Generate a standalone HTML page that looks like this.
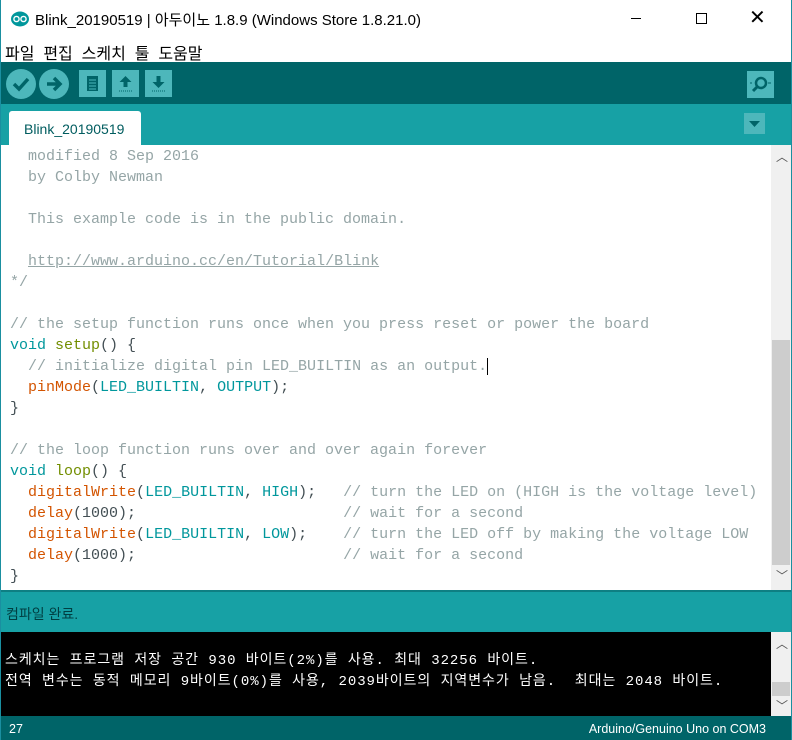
<!DOCTYPE html>
<html><head><meta charset="utf-8"><style>
*{margin:0;padding:0;box-sizing:border-box}
body{width:792px;height:740px;overflow:hidden;background:#fff;font-family:"Liberation Sans","Noto Sans CJK KR",sans-serif;position:relative}
.abs{position:absolute}
#title{left:0;top:0;width:792px;height:38px;background:#fff;font-size:15px;color:#000}
#menu{top:38px;left:0;width:792px;height:24px;font-size:16px}
#tool{top:62px;left:1px;width:790px;height:42px;background:#006468}
#tabs{top:104px;left:1px;width:790px;height:41px;background:#17a1a5}
#ed{top:145px;left:1px;width:770px;height:445px;background:#fff;overflow:hidden}
pre{font-family:"Liberation Mono",monospace;font-size:15px;line-height:21px;color:#434f54;position:absolute;left:9px;top:1px}
.c{color:#95a5a6}.k{color:#00979c}.f{color:#d35400}.s{color:#728e00}
#sb{top:145px;left:771px;width:20px;height:445px;background:#f0f0f0}
#status{top:590px;left:1px;width:790px;height:42px;background:#17a1a5;border-top:2px solid #0e7f83}
#con{top:632px;left:1px;width:770px;height:84px;background:#000;color:#fff;font-family:"Liberation Mono","Noto Sans CJK KR",monospace;font-size:14px;line-height:21px;padding:19px 0 0 4px;letter-spacing:0.95px;white-space:pre}
#sb2{top:632px;left:771px;width:20px;height:84px;background:#f0f0f0}
#foot{top:716px;left:1px;width:790px;height:24px;background:#006468;color:#fff;font-size:12.5px}
.btn{position:absolute;top:8px;width:27px;height:27px;background:#4db7bb}
.cir{position:absolute;top:7px;width:30px;height:30px;border-radius:50%;background:#4db7bb}
</style></head><body>
<div class="abs" style="left:0;top:0;width:1px;height:740px;background:#1a8fa0;z-index:5"></div>
<div class="abs" style="left:791px;top:0;width:1px;height:740px;background:#1a8fa0;z-index:5"></div>
<div id="title" class="abs">
 <svg class="abs" style="left:11px;top:11px" width="18" height="16"><ellipse cx="9" cy="8" rx="9" ry="7.5" fill="#00979c"/><circle cx="5.5" cy="8" r="2.6" fill="none" stroke="#fff" stroke-width="1.4"/><circle cx="12.5" cy="8" r="2.6" fill="none" stroke="#fff" stroke-width="1.4"/></svg>
 <span class="abs" style="left:35px;top:9px">Blink_20190519 | 아두이노 1.8.9 (Windows Store 1.8.21.0)</span>
 <span class="abs" style="left:631px;top:18px;width:10px;height:1px;background:#000"></span>
 <span class="abs" style="left:696px;top:13px;width:11px;height:11px;border:1px solid #000"></span>
 <span class="abs" style="left:749px;top:5px;font-size:20px;font-weight:300">✕</span>
</div>
<div id="menu" class="abs"><span class="abs" style="left:5px;top:2px">파일&nbsp; 편집&nbsp; 스케치&nbsp; 툴&nbsp; 도움말</span></div>
<div id="tool" class="abs">
 <div class="cir" style="left:5px"><svg width="30" height="30"><path d="M8 15l5 5 9-10" stroke="#006468" stroke-width="3.5" fill="none"/></svg></div>
 <div class="cir" style="left:38px"><svg width="30" height="30"><path d="M8 15h12M15 9l6 6-6 6" stroke="#006468" stroke-width="3.5" fill="none"/></svg></div>
 <div class="btn" style="left:78px"><svg width="27" height="27"><rect x="8" y="6" width="11" height="15" fill="#006468"/><path d="M10 10h7M10 13h7M10 16h7M10 19h7" stroke="#4db7bb"/></svg></div>
 <div class="btn" style="left:111px"><svg width="27" height="27"><path d="M13.5 6l6 6h-4v5h-4v-5h-4z" fill="#006468"/><path d="M7 21h13" stroke="#006468" stroke-dasharray="1 1"/></svg></div>
 <div class="btn" style="left:144px"><svg width="27" height="27"><path d="M13.5 18l6-6h-4V6h-4v6h-4z" fill="#006468"/><path d="M7 21h13" stroke="#006468" stroke-dasharray="1 1"/></svg></div>
 <div class="btn" style="left:746px;top:9px"><svg width="27" height="27"><circle cx="14" cy="12" r="5" fill="none" stroke="#006468" stroke-width="2.5"/><path d="M10 16l-4 4" stroke="#006468" stroke-width="3"/><path d="M3 12h2M21 12h3" stroke="#006468"/></svg></div>
</div>
<div id="tabs" class="abs">
 <div class="abs" style="left:8px;top:7px;width:132px;height:34px;background:#fff;border-radius:3px 3px 0 0;color:#005c5f;font-size:14px;padding:10px 0 0 15px">Blink_20190519</div>
 <div class="abs" style="left:743px;top:9px;width:21px;height:21px;background:#4db7bb"><svg width="21" height="21"><path d="M5 8h11l-5.5 6z" fill="#006468"/></svg></div>
</div>
<div id="ed" class="abs"><pre><span class="c">  modified 8 Sep 2016
  by Colby Newman

  This example code is in the public domain.

  <u>http://www.arduino.cc/en/Tutorial/Blink</u>
*/</span>

<span class="c">// the setup function runs once when you press reset or power the board</span>
<span class="k">void</span> <span class="s">setup</span>() {
  <span class="c">// initialize digital pin LED_BUILTIN as an output.</span><span style="border-left:1px solid #000"></span>
  <span class="f">pinMode</span>(<span class="k">LED_BUILTIN</span>, <span class="k">OUTPUT</span>);
}

<span class="c">// the loop function runs over and over again forever</span>
<span class="k">void</span> <span class="s">loop</span>() {
  <span class="f">digitalWrite</span>(<span class="k">LED_BUILTIN</span>, <span class="k">HIGH</span>);   <span class="c">// turn the LED on (HIGH is the voltage level)</span>
  <span class="f">delay</span>(1000);                       <span class="c">// wait for a second</span>
  <span class="f">digitalWrite</span>(<span class="k">LED_BUILTIN</span>, <span class="k">LOW</span>);    <span class="c">// turn the LED off by making the voltage LOW</span>
  <span class="f">delay</span>(1000);                       <span class="c">// wait for a second</span>
}</pre></div>
<div id="sb" class="abs">
 <span class="abs" style="left:5px;top:3px;font-size:12px;color:#555">︿</span>
 <div class="abs" style="left:1px;top:195px;width:18px;height:225px;background:#cdcdcd"></div>
 <span class="abs" style="left:5px;top:422px;font-size:12px;color:#555">﹀</span>
</div>
<div id="status" class="abs"><span class="abs" style="left:5px;top:12px;font-size:14px;color:#003f42">컴파일 완료.</span></div>
<div id="con" class="abs">스케치는 프로그램 저장 공간 930 바이트(2%)를 사용. 최대 32256 바이트.<br>전역 변수는 동적 메모리 9바이트(0%)를 사용, 2039바이트의 지역변수가 남음.  최대는 2048 바이트.</div>
<div id="sb2" class="abs">
 <span class="abs" style="left:5px;top:3px;font-size:12px;color:#555">︿</span>
 <div class="abs" style="left:1px;top:50px;width:18px;height:14px;background:#cdcdcd"></div>
 <span class="abs" style="left:5px;top:65px;font-size:12px;color:#555">﹀</span>
</div>
<div id="foot" class="abs"><span class="abs" style="left:8px;top:6px">27</span><span class="abs" style="right:25px;top:6px">Arduino/Genuino Uno on COM3</span></div>
</body></html>
